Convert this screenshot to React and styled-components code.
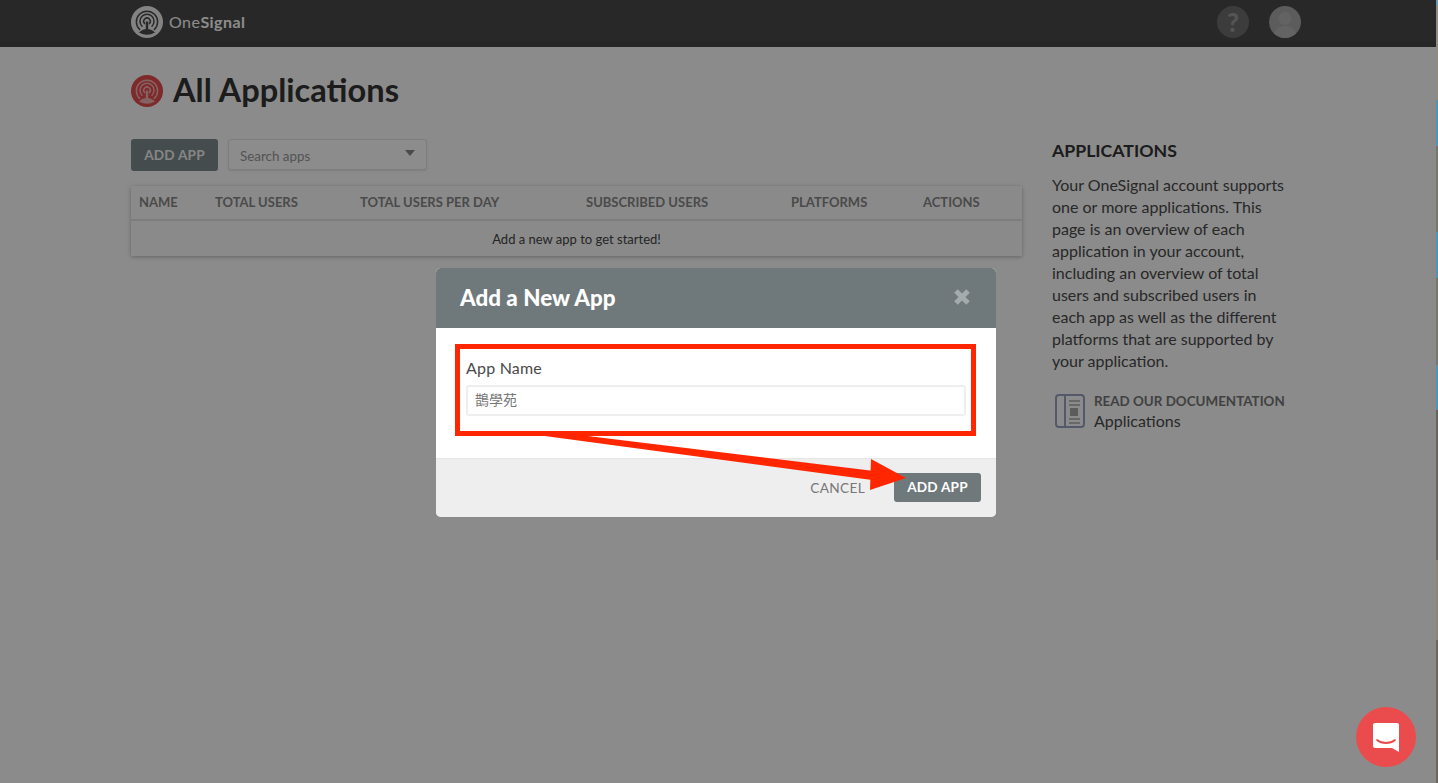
import React from 'react';
import styled, { createGlobalStyle } from 'styled-components';

const sans = '"Lato", "Noto Sans", "Liberation Sans", sans-serif';

const GlobalStyle = createGlobalStyle`
  html, body {
    margin: 0;
    height: 100%;
    overflow: hidden;
    background: #fff;
    font-family: ${sans};
  }
  * { box-sizing: border-box; }
`;

const Page = styled.div`
  height: 783px;
  background: #fdfdfd;
`;

const TopBar = styled.header`
  height: 47px;
  background: #4a4a4a;
  border-bottom: 5px solid #464646;
  padding: 6px 137px 0 131px;
  display: flex;
  justify-content: space-between;
  align-items: flex-start;
`;

const Brand = styled.div`
  display: flex;
  align-items: center;
  gap: 6px;
  height: 32px;
  color: #fff;
  font-size: 16px;
  font-weight: 400;
  letter-spacing: 0.45px;
  b { font-weight: 700; }
  span { padding-bottom: 2px; }
`;

const TopActions = styled.div`
  display: flex;
  gap: 20px;
`;

const RoundIcon = styled.div`
  width: 32px;
  height: 32px;
  border-radius: 50%;
  background: ${p => p.$bg};
  color: #9a9a9a;
  display: flex;
  align-items: center;
  justify-content: center;
  overflow: hidden;
  font-size: 26px;
  font-weight: 900;
`;

const Content = styled.main`
  display: grid;
  grid-template-columns: 891px 240px;
  column-gap: 30px;
  padding: 0 0 0 131px;
`;

const Title = styled.h1`
  grid-column: 1 / -1;
  margin: 0;
  height: 92px;
  display: flex;
  align-items: center;
  padding-bottom: 4px;
  gap: 10px;
  font-size: 32.6px;
  line-height: 36px;
  font-weight: 700;
  color: #333;
  span { position: relative; top: -1px; }
`;

const Toolbar = styled.div`
  display: flex;
  gap: 10px;
  margin-bottom: 15px;
`;

const PrimaryButton = styled.button`
  width: ${p => p.$w}px;
  height: ${p => p.$h}px;
  border: 0;
  border-radius: 3px;
  padding: 0;
  background: ${p => p.$bg};
  color: ${p => p.$fg || '#fff'};
  font-family: ${sans};
  font-size: 13.6px;
  font-weight: 700;
  letter-spacing: 0.2px;
`;

const SearchSelect = styled.div`
  width: 199px;
  height: 31px;
  background: #fff;
  border: 1px solid #e6e6e6;
  border-radius: 3px;
  box-shadow: 0 1px 2px rgba(0, 0, 0, 0.1);
  display: flex;
  align-items: center;
  justify-content: space-between;
  padding: 2px 11px 0 11px;
  color: #999;
  font-size: 13.4px;
  &::after {
    content: '';
    border-left: 5px solid transparent;
    border-right: 5px solid transparent;
    border-top: 6px solid #888;
    margin-top: -5px;
  }
`;

const Table = styled.section`
  width: 891px;
  background: #fcfcfc;
  box-shadow: 0 1px 4px rgba(0, 0, 0, 0.28);
`;

const TableHead = styled.div`
  display: grid;
  grid-template-columns: 76px 145px 226px 205px 132px 1fr;
  height: 35px;
  align-items: center;
  border-bottom: 2px solid #e4e4e4;
  padding-bottom: 1px;
`;

const HeadCell = styled.div`
  padding-left: 8px;
  color: #888;
  font-size: 13px;
  font-weight: 700;
  white-space: nowrap;
`;

const EmptyRow = styled.div`
  height: 35px;
  display: flex;
  align-items: center;
  justify-content: center;
  color: #444;
  font-size: 13px;
`;

const Side = styled.aside`
  grid-column: 2;
  grid-row: 2 / span 2;
  padding-top: 2px;
`;

const SideTitle = styled.h2`
  margin: 0 0 13px;
  font-size: 17.7px;
  line-height: 20px;
  font-weight: 700;
  color: #333;
`;

const SideText = styled.p`
  margin: 0 0 19px;
  font-size: 16px;
  line-height: 22px;
  color: #4a4a4a;
`;

const DocLink = styled.div`
  display: flex;
  gap: 9px;
  align-items: center;
  padding-left: 3px;
`;

const DocText = styled.div`
  font-size: 16px;
  line-height: 20px;
  color: #4a4a4a;
  white-space: nowrap;
  small {
    display: block;
    font-size: 13.4px;
    font-weight: 700;
    color: #777;
  }
`;

const Overlay = styled.div`
  position: fixed;
  inset: 0;
  background: rgba(0, 0, 0, 0.45);
  padding: 268px 6px 0 0;
  display: flex;
  justify-content: center;
  align-items: flex-start;
`;

const Modal = styled.div`
  position: relative;
  width: 560px;
  height: 249px;
  border-radius: 5px;
  overflow: hidden;
  background: #fff;
  display: flex;
  flex-direction: column;
`;

const ModalHead = styled.div`
  height: 60px;
  flex: none;
  background: #6f797b;
  color: #fff;
  padding: 0 25px 2px 24px;
  display: flex;
  align-items: center;
  justify-content: space-between;
  font-size: 22.4px;
  font-weight: 900;
`;

const ModalBody = styled.div`
  height: 130px;
  flex: none;
  padding: 30px 30px 0;
`;

const Label = styled.label`
  display: block;
  color: #4a4a4a;
  font-size: 16px;
  line-height: 20px;
  margin-bottom: 7px;
  letter-spacing: 0.2px;
`;

const TextInput = styled.input`
  display: block;
  width: 500px;
  height: 31px;
  border: 2px solid #eee;
  border-radius: 3px;
  padding: 0 7px 3px;
  color: #777;
  font-family: ${sans}, "Noto Sans CJK TC";
  font-size: 14px;
  outline: none;
`;

const ModalFoot = styled.div`
  flex: 1;
  background: #eee;
  border-top: 1px solid #e6e6e6;
  display: flex;
  justify-content: flex-end;
  align-items: center;
  gap: 29px;
  padding: 0 15px 2px 0;
`;

const CancelLink = styled.span`
  color: #777;
  font-size: 13.7px;
  font-weight: 400;
  letter-spacing: 0.3px;
`;

const Highlight = styled.div`
  position: absolute;
  left: 19px;
  top: 76px;
  width: 521px;
  height: 92px;
  border: 5px solid #ff2600;
  pointer-events: none;
`;

const ArrowLayer = styled.svg`
  position: absolute;
  left: 0;
  top: 0;
  width: 560px;
  height: 249px;
  pointer-events: none;
`;

const ChatBubble = styled.div`
  position: fixed;
  left: 1356px;
  top: 707px;
  width: 60px;
  height: 60px;
  border-radius: 50%;
  background: #ea4c4d;
  display: flex;
  align-items: center;
  justify-content: center;
`;

const EdgeStrip = styled.div`
  position: fixed;
  top: 0;
  right: 0;
  width: 2px;
  height: 783px;
  background: linear-gradient(
    to bottom,
    #5d9dbb 0 5px,
    #8f8c7c 5px 100px,
    #4f93b6 100px 146px,
    #77766c 146px 232px,
    #4f93b6 232px 278px,
    #77766c 278px 365px,
    #4f93b6 365px 410px,
    #66635c 410px 560px,
    #8a847a 560px 640px,
    #6b675f 640px 783px
  );
`;

const LogoMark = ({ size, disc, ring }) => (
  <svg width={size} height={size} viewBox="0 0 32 32">
    <circle cx="16" cy="16" r="16" fill={disc} />
    <g fill="none" stroke={ring} strokeWidth="1.5" strokeLinecap="round">
      <path d="M8.6 23.4a10.6 10.6 0 1 1 14.8 0" />
      <path d="M11 20.2a7 7 0 1 1 10 0" />
      <path d="M13.6 17.6a3.3 3.3 0 1 1 4.8 0" />
    </g>
    <path d="M14.8 15.5h2.4v8.5h-2.4z" fill={ring} />
    <path d="M8 26.5c3-3 5-3.6 8-3.6s5 .6 8 3.6a16 16 0 0 1-16 0z" fill={ring} />
  </svg>
);

const DocIcon = () => (
  <svg width="30" height="34" viewBox="0 0 30 34" fill="none">
    <rect x="1" y="1" width="28" height="32" rx="3" stroke="#97a3c4" strokeWidth="2" />
    <path d="M10 1v32" stroke="#97a3c4" strokeWidth="2" />
    <path d="M14 7h11M14 11h11M14 25h11M14 29h11" stroke="#a8a8a8" strokeWidth="1.400" />
    <rect x="15" y="14" width="8" height="8" fill="#a8a8a8" />
  </svg>
);

const columns = ['NAME', 'TOTAL USERS', 'TOTAL USERS PER DAY', 'SUBSCRIBED USERS', 'PLATFORMS', 'ACTIONS'];

export default function App() {
  return (
    <>
      <GlobalStyle />
      <Page>
        <TopBar>
          <Brand>
            <LogoMark size={32} disc="#eeeeee" ring="#4a4a4a" />
            <span>One<b>Signal</b></span>
          </Brand>
          <TopActions>
            <RoundIcon $bg="#6d6d6d">?</RoundIcon>
            <RoundIcon $bg="#a8a8a8">
              <svg width="32" height="32" viewBox="0 0 32 32">
                <circle cx="16" cy="12.500" r="6.500" fill="#b4b4b4" />
                <path d="M4 32c1-9 6-12 12-12s11 3 12 12z" fill="#b4b4b4" />
              </svg>
            </RoundIcon>
          </TopActions>
        </TopBar>
        <Content>
          <Title>
            <LogoMark size={32} disc="#e54b4d" ring="#f5b5b5" />
            <span>All Applications</span>
          </Title>
          <div>
            <Toolbar>
              <PrimaryButton $w={87} $h={32} $bg="#7c8a8c" $fg="#f4f4f4">ADD APP</PrimaryButton>
              <SearchSelect>Search apps</SearchSelect>
            </Toolbar>
            <Table>
              <TableHead>
                {columns.map(c => <HeadCell key={c}>{c}</HeadCell>)}
              </TableHead>
              <EmptyRow>Add a new app to get started!</EmptyRow>
            </Table>
          </div>
          <Side>
            <SideTitle>APPLICATIONS</SideTitle>
            <SideText>
              Your OneSignal account supports one or more applications. This page is an overview of each
              application in your account, including an overview of total users and subscribed users in
              each app as well as the different platforms that are supported by your application.
            </SideText>
            <DocLink>
              <DocIcon />
              <DocText>
                <small>READ OUR DOCUMENTATION</small>
                Applications
              </DocText>
            </DocLink>
          </Side>
        </Content>
      </Page>
      <Overlay>
        <Modal>
          <ModalHead>
            Add a New App
            <svg width="18" height="18" viewBox="0 0 18 18">
              <path d="M3 3l12 12M15 3L3 15" stroke="#a4abad" strokeWidth="5" />
            </svg>
          </ModalHead>
          <ModalBody>
            <Label>App Name</Label>
            <TextInput readOnly value="鵲學苑" />
          </ModalBody>
          <ModalFoot>
            <CancelLink>CANCEL</CancelLink>
            <PrimaryButton $w={87} $h={29} $bg="#6f797b">ADD APP</PrimaryButton>
          </ModalFoot>
          <Highlight />
          <ArrowLayer viewBox="0 0 560 249">
            <polygon fill="#ff2600" points="94,166 135,166 438,203 436,212" />
            <polygon fill="#ff2600" points="435,191 470,210 434,222" />
          </ArrowLayer>
        </Modal>
      </Overlay>
      <ChatBubble>
        <svg width="28" height="32" viewBox="0 0 28 32">
          <path d="M3 2h22a2 2 0 0 1 2 2v27l-7-4H3a2 2 0 0 1-2-2V4a2 2 0 0 1 2-2z" fill="#fff" />
          <path d="M5 19c5 4 13 4 18 0" fill="none" stroke="#ea4c4d" strokeWidth="1.800" strokeLinecap="round" />
        </svg>
      </ChatBubble>
      <EdgeStrip />
    </>
  );
}
